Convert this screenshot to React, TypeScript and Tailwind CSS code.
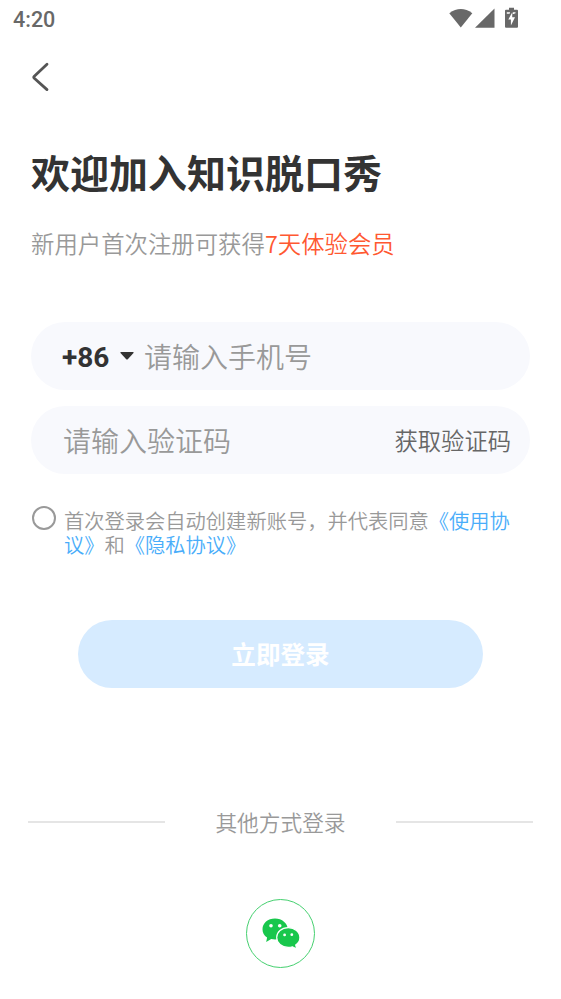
import React from "react";

function StatusBar() {
  return (
    <header className="flex h-10 items-center justify-between pl-[13px] pr-[41px] text-[#686868]">
      <span className="font-['Roboto',sans-serif] text-[21.5px] leading-6 font-medium">4:20</span>
      <svg width="71" height="22" viewBox="0 0 71 22" fill="currentColor" className="overflow-visible" aria-hidden="true">
        <path d="M0.300 4.200Q11.800 -4.200 23.300 4.200L11.800 18.500Z" />
        <path d="M45.500 -.5V18.800H26Z" />
        <path d="M60 -1.200h5v2h3q1 0 1 1v16q0 1-1 1H57q-1 0-1-1v-16q0-1 1-1h3Z" />
        <path fill="#fff" d="M57.800 3.300h3.300l-.5 1.500h-2.800ZM64 3.300h2.500v1l-2.800 1ZM63.300 3.300L59.300 10.600h2.600v5.900L66 8.300h-2.800Z" />
      </svg>
    </header>
  );
}

function WeChatIcon() {
  return (
    <svg width="40" height="34" viewBox="0 0 40 34" aria-hidden="true">
      <path
        fill="#18c74c"
        d="M14 1.500C6.800 1.500 1.500 6.200 1.500 12.200c0 3.400 1.600 6.300 4.600 8.400L5.200 25l5-2.900c1.300.3 2.500.4 3.800.4 7 0 12.700-4.700 12.700-10.400S21 1.500 14 1.500Z"
      />
      <path
        fill="#18c74c"
        stroke="#fff"
        strokeWidth="1.200"
        d="M27.200 10.600c-6.600 0-11.500 4.300-11.500 9.900s5 9.900 11.500 9.900c1.500 0 3-.2 4.300-.6l4.300 2.200-1.100-4c2.700-1.800 4.200-4.400 4.200-7.500 0-5.600-5.200-9.900-11.700-9.900Z"
      />
      <g fill="#fff">
        <circle cx="10" cy="8.700" r="1.800" />
        <circle cx="18.700" cy="8.700" r="1.800" />
        <circle cx="23.600" cy="17.900" r="1.400" />
        <circle cx="30.800" cy="17.700" r="1.400" />
      </g>
    </svg>
  );
}

export default function App() {
  return (
    <div className="flex h-[999px] w-[561px] flex-col overflow-hidden bg-white font-['Noto_Sans_CJK_SC',sans-serif] font-[350] text-[#999999]">
      <StatusBar />
      <nav className="flex h-[73px] items-center pl-[31px]">
        <button aria-label="返回" className="text-[#555555]">
          <svg width="20" height="30" viewBox="0 0 20 30" fill="none" stroke="currentColor" strokeWidth="2.800" strokeLinecap="round" strokeLinejoin="round">
            <path d="M16 2.300L3.300 14.200q-1 1 0 2L16 27.600" />
          </svg>
        </button>
      </nav>

      <main className="flex flex-col px-[31px] pt-[28px]">
        <h1 className="h-[60px] text-[39px] leading-[60px] font-bold whitespace-nowrap text-[#333333]">欢迎加入知识脱口秀</h1>
        <p className="mt-[25px] h-[34px] text-[23.400px] leading-[34px] whitespace-nowrap">
          新用户首次注册可获得<span className="text-[#ff5831]">7天体验会员</span>
        </p>

        <form className="mt-[62px] flex flex-col">
          <div className="flex h-[68px] w-[499px] items-center rounded-full bg-[#f8f9fd] pl-[31px]">
            <span className="w-[58px] pt-[3px] font-['Roboto',sans-serif] text-[28px] leading-8 font-bold text-[#333333]">+86</span>
            <svg width="14" height="8" viewBox="0 0 14 8" fill="#333333" aria-hidden="true">
              <path d="M1 0h12q1 0 .5 1L8 7q-1 1-2 0L.5 1Q0 0 1 0Z" />
            </svg>
            <span className="ml-[10px] text-[28px] leading-10">请输入手机号</span>
          </div>
          <div className="mt-[16px] flex h-[68px] w-[499px] items-center justify-between rounded-full bg-[#f8f9fd] pr-[19px] pl-[32px]">
            <span className="text-[28px] leading-10">请输入验证码</span>
            <span className="text-[23.300px] leading-9 text-[#666666]">获取验证码</span>
          </div>

          <div className="mt-[32px] flex items-start pl-px">
            <span className="h-6 w-6 shrink-0 rounded-full border-2 border-[#999999]" />
            <p className="ml-[8px] pt-[2px] text-[20.270px] leading-6 whitespace-nowrap">
              首次登录会自动创建新账号，并代表同意<span className="text-[#49adfa]">《使用协</span>
              <br />
              <span className="text-[#49adfa]">议》</span>和<span className="text-[#49adfa]">《隐私协议》</span>
            </p>
          </div>

          <button type="button" className="mt-[64px] h-[68px] w-[405px] self-center rounded-full bg-[#d6ebff] pb-[2px] text-[24.600px] font-bold text-white">
            立即登录
          </button>
        </form>
      </main>

      <footer className="mt-[117px] flex flex-col items-center">
        <div className="flex h-[34px] w-full items-center justify-between px-[28px]">
          <span className="h-[2px] w-[137px] bg-[#e5e5e5]" />
          <span className="text-[21.700px] leading-[34px]">其他方式登录</span>
          <span className="h-[2px] w-[137px] bg-[#e5e5e5]" />
        </div>
        <button aria-label="微信登录" className="mt-[60px] flex h-[69px] w-[69px] items-center justify-center rounded-full border border-[#45d06f]">
          <WeChatIcon />
        </button>
      </footer>
    </div>
  );
}
